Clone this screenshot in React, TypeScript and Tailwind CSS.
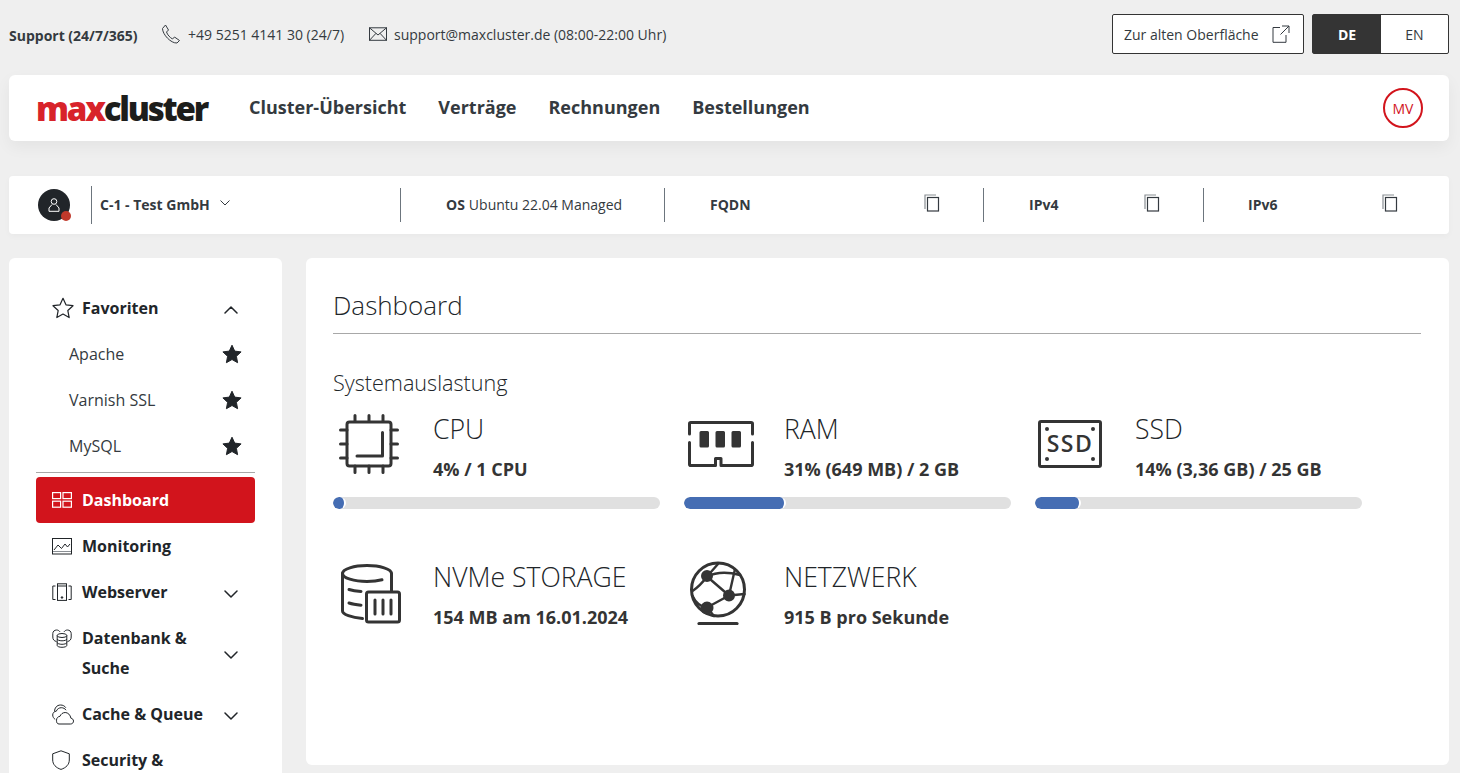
import React from "react";

const dark = "#343434";

function Chevron({ up = false }: { up?: boolean }) {
  return (
    <svg className="mt-[3px] shrink-0" width="14" height="8" viewBox="0 0 14 8" fill="none" stroke="#212529" strokeWidth="1.5" strokeLinecap="round" strokeLinejoin="round">
      <path d={up ? "M1 7L7 1L13 7" : "M1 1L7 7L13 1"} />
    </svg>
  );
}

function Star({ filled = false, size = 20 }: { filled?: boolean; size?: number }) {
  return (
    <svg width={size} height={size} viewBox="0 0 20 20" fill={filled ? "#212529" : "none"} stroke="#212529" strokeWidth={filled ? 1 : 1.1} strokeLinejoin="round">
      <path d="M10 1.2l2.7 5.9 6.4.8-4.7 4.4 1.2 6.4L10 15.5l-5.6 3.2 1.2-6.4L.9 7.9l6.4-.8z" />
    </svg>
  );
}

function CopyIcon() {
  return (
    <svg className="mb-[4px]" width="16" height="18" viewBox="0 0 16 18" fill="none" strokeWidth="1.2">
      <path d="M1 15V1h11" stroke="#8a8f94" />
      <rect x="3.5" y="3.5" width="11" height="13.5" stroke="#343a40" />
    </svg>
  );
}

function DashIcon() {
  return (
    <svg width="20" height="16" viewBox="0 0 20 16" fill="none" stroke="#fff" strokeWidth="1.2">
      <rect x=".6" y=".6" width="8" height="6" />
      <rect x="11" y=".6" width="8.4" height="6" />
      <rect x=".6" y="9.2" width="8" height="6" />
      <rect x="11" y="9.2" width="8.4" height="6" />
    </svg>
  );
}
function MonIcon() {
  return (
    <svg width="20" height="17" viewBox="0 0 20 17" fill="none" stroke="#212529" strokeWidth="1">
      <rect x=".5" y=".5" width="19" height="15.5" />
      <path d="M2 12l4-5 3.5 3.5L13 6l2.5 3L18 6" />
      <path d="M1 13.5h18" stroke="#8a8f94" />
    </svg>
  );
}
function WebIcon() {
  return (
    <svg width="20" height="18" viewBox="0 0 20 18" fill="none" stroke="#212529" strokeWidth="1">
      <path d="M3.5 3H.8v13.5h2.7M16.5 3h2.7v13.5h-2.7" />
      <rect x="5.5" y=".8" width="9" height="16.6" />
      <path d="M5.5 3h9" />
      <circle cx="10" cy="14.5" r=".8" fill="#212529" />
    </svg>
  );
}
function DbIcon() {
  return (
    <svg width="20" height="19" viewBox="0 0 20 19" fill="none" stroke="#212529" strokeWidth="1">
      <path d="M4.5 12.5C2 12 .8 10.5.8 8V4.5C.8 2.5 2.5 1 4.5 1c1.500 0 2.500.6 3.500 1.800" />
      <path d="M15.5 12.5c2.500-.5 3.700-2 3.700-4.500V4.500C19.200 2.500 17.500 1 15.500 1c-1.500 0-2.500.6-3.500 1.800" />
      <ellipse cx="10" cy="6.5" rx="4.8" ry="2" />
      <path d="M5.2 6.5v10c0 1 2.200 1.800 4.800 1.800s4.800-.8 4.800-1.800v-10M5.2 10c0 1 2.200 1.800 4.800 1.800s4.800-.8 4.800-1.800M5.200 13.500c0 1 2.200 1.800 4.800 1.800s4.800-.8 4.800-1.800" />
    </svg>
  );
}
function CacheIcon() {
  return (
    <svg width="22" height="21" viewBox="0 0 22 21" fill="none" stroke="#212529" strokeWidth="1">
      <path d="M7 20h11.500c1.800 0 3-1.300 3-2.900 0-1.500-1.100-2.700-2.600-2.900C18.400 11 16 8.500 13.200 8.500c-2.400 0-4.400 1.600-5.200 3.800C6.200 12.400 4.500 14 4.500 16.200S5 20 7 20z" />
      <path d="M3.200 15.500C1.700 14.300.7 12.800.7 11c0-2.200 1.700-3.800 3.600-3.800C5 5 7.200 3.700 9.300 3.700c2 0 3.700.9 4.800 2.500" />
      <path d="M2.600 7.200C2.500 4.200 4.800 1 8.500 1c2.300 0 4.300 1 5.300 2.700" />
    </svg>
  );
}
function ShieldIcon() {
  return (
    <svg width="18" height="20" viewBox="0 0 18 20" fill="none" stroke="#212529" strokeWidth="1">
      <path d="M9 .8L17.300 3.800V10c0 4.400-3.200 7.800-8.300 9.400C3.900 17.800.7 14.400.7 10V3.800z" />
    </svg>
  );
}

function CpuIcon() {
  return (
    <svg width="60" height="60" viewBox="0 0 60 60" fill="none" stroke={dark} strokeWidth="3" strokeLinecap="round" strokeLinejoin="round">
      <rect x="8" y="8" width="44" height="44" rx="2.5" />
      <path d="M16 1.500v6M30 1.500v6M44 1.500v6M16 52v6.500M30 52v6.500M44 52v6.500M1.500 16h6.500M1.500 30h6.500M1.500 44h6.500M52 16h6.500M52 30h6.500M52 44h6.500" />
      <path d="M43.500 18.500V42H18" />
    </svg>
  );
}
function RamIcon() {
  return (
    <svg width="66" height="46" viewBox="0 0 66 46" fill="none" stroke={dark} strokeWidth="3" strokeLinecap="round" strokeLinejoin="round">
      <path d="M1.500 13V2.800Q1.500 1.500 2.800 1.500H63Q64.500 1.500 64.500 2.800V13" />
      <path d="M1.500 21.500V43.200Q1.500 44.500 2.800 44.500H27.500V37.500H33V44.500H63Q64.500 44.500 64.500 43.200V21.500" />
      <path d="M13 11.500h6.500v13.500H13zM29 11.500h6.500v13.500H29zM45 11.500h6.500v13.500H45z" fill={dark} />
    </svg>
  );
}
function SsdIcon() {
  return (
    <svg width="64" height="48" viewBox="0 0 64 48" fill="none" stroke={dark} strokeWidth="3" strokeLinejoin="round">
      <rect x="1.5" y="1.5" width="61" height="45" rx="1.5" />
      <circle cx="9" cy="9" r="2" fill={dark} stroke="none" />
      <circle cx="55" cy="9" r="2" fill={dark} stroke="none" />
      <circle cx="9" cy="39" r="2" fill={dark} stroke="none" />
      <circle cx="55" cy="39" r="2" fill={dark} stroke="none" />
      <text x="32" y="32" textAnchor="middle" letterSpacing="1.5" fill={dark} stroke="none" fontSize="23" fontWeight="600" style={{ fontFamily: "'Open Sans', sans-serif" }}>SSD</text>
    </svg>
  );
}
function StorageIcon() {
  return (
    <svg width="60" height="60" viewBox="0 0 60 60" fill="none" stroke={dark} strokeWidth="3" strokeLinecap="round" strokeLinejoin="round">
      <path d="M1.500 9.500C1.500 5 13 1.500 26 1.500s24.500 3.500 24.500 8" />
      <path d="M1.500 9.500c0 4.500 11.500 8 24.500 8 5.500 0 11-.6 15-1.700" />
      <path d="M50.500 9.500V27M1.500 9.500V47c0 3.500 9 6.500 20 7.500" />
      <path d="M8 25.500c3 1 7 1.700 12 2M8 39c3 1 7 1.700 12 2.200" />
      <rect x="25.500" y="28" width="33" height="30" rx="2" />
      <path d="M34 36v14M42 36v14M50 36v14" />
    </svg>
  );
}
function NetIcon() {
  return (
    <svg width="60" height="64" viewBox="0 0 60 64" fill="none" stroke={dark} strokeWidth="3" strokeLinecap="round" strokeLinejoin="round">
      <circle cx="30" cy="28.5" r="26.5" />
      <path d="M19 15.500L30 3M19 15.500C15 21 9 27 4.500 30M19 15.500C28 11 41 11 52 14M19 15.500L41 34.500M41 34.500L47 8M41 34.500L56.500 33M41 34.500L19 46.500M19 46.500C13 46 8 42 4.500 35M19 46.500L26 55" strokeWidth="2.4" />
      <circle cx="19" cy="15" r="4.5" fill={dark} />
      <circle cx="41" cy="34.5" r="4.5" fill={dark} />
      <circle cx="19" cy="47" r="5" fill={dark} />
      <path d="M11 62.500h38" strokeWidth="3.2" />
    </svg>
  );
}

function Stat({ icon, title, sub, bar }: { icon: React.ReactNode; title: string; sub: string; bar?: number }) {
  return (
    <div className="w-[327px] h-[138px]">
      <div className="flex">
        <div className="w-[100px] h-[64px] flex items-center shrink-0">{icon}</div>
        <div>
          <div className="text-[26.6px] leading-[34px] font-light text-[#212529]">{title}</div>
          <div className="text-[18px] leading-[24px] font-bold text-[#343434] mt-[11px]">{sub}</div>
        </div>
      </div>
      {bar !== undefined && (
        <div className="h-[12px] rounded-full bg-[#e0e0e0] mt-[16px] overflow-hidden">
          <div className="h-full rounded-full bg-[#456db3] border-r-2 border-white box-content" style={{ width: bar }} />
        </div>
      )}
    </div>
  );
}

function NavItem({ icon, children, chevron = false, active = false }: { icon: React.ReactNode; children: React.ReactNode; chevron?: boolean; active?: boolean }) {
  return (
    <div className={`flex items-center pl-[16px] pr-[17px] py-[8px] rounded-[4px] ${active ? "bg-[#d2141c] text-white" : "text-[#212529]"}`}>
      <div className="w-[30px] shrink-0 self-start h-[30px] flex items-center">{icon}</div>
      <div className="flex-1 text-[16px] leading-[30px] font-bold">{children}</div>
      {chevron && <Chevron />}
    </div>
  );
}

function FavItem({ label }: { label: string }) {
  return (
    <div className="flex items-center justify-between pl-[33px] pr-[13px] h-[46px]">
      <span className="text-[16px] text-[#343a40]">{label}</span>
      <Star filled />
    </div>
  );
}

export default function App() {
  return (
    <div className="h-[773px] overflow-hidden bg-[#efefef] pl-[9px] pr-[11px]" style={{ fontFamily: "'Open Sans', sans-serif" }}>
      <div className="h-[75px] flex items-start">
        <div className="flex items-center h-[68px] text-[#343a40]">
          <span className="text-[14px] font-bold w-[152px] mt-[3px]">Support (24/7/365)</span>
          <svg width="20" height="20" viewBox="0 0 20 20" fill="none" stroke="#343a40" strokeWidth="1" strokeLinejoin="round">
            <path d="M1.5 4.500L4.500 1l3 5-2 2c1 3 3.500 5.500 6 7l2-2 5 3.500-2.500 2.500C10 19.500 1.500 10.500 1.500 4.500z" />
          </svg>
          <span className="text-[14px] ml-[7px] w-[181px]">+49 5251 4141 30 (24/7)</span>
          <svg width="18" height="14" viewBox="0 0 18 14" fill="none" stroke="#343a40" strokeWidth="1">
            <rect x=".5" y=".8" width="17" height="12.5" />
            <path d="M.5.800L9 8l8.500-7.200M.5 13.300l6.500-7M17.500 13.300l-6.500-7" />
          </svg>
          <span className="text-[14px] ml-[7px]">support@maxcluster.de (08:00-22:00 Uhr)</span>
        </div>
        <div className="ml-auto flex gap-[8px] mt-[14px]">
          <div className="w-[192px] h-[40px] border border-[#343434] rounded-[2px] bg-white flex items-center pl-[11px] text-[14px] text-[#343a40]">
            <span className="w-[136px] whitespace-nowrap">Zur alten Oberfläche</span>
            <svg className="ml-[12px]" width="18" height="18" viewBox="0 0 18 18" fill="none" stroke="#343a40" strokeWidth="1">
              <path d="M8 2.500H1v14.800h13V10M10 1h7v7M17 1L8.500 9.500" />
            </svg>
          </div>
          <div className="w-[137px] h-[40px] border border-[#343434] rounded-[2px] bg-white flex text-[14px]">
            <div className="w-[68px] bg-[#343434] text-white font-bold flex items-center justify-center">DE</div>
            <div className="flex-1 flex items-center justify-center text-[#343a40]">EN</div>
          </div>
        </div>
      </div>

      <div className="h-[66px] bg-white rounded-[6px] shadow-[0_6px_16px_rgba(0,0,0,0.05)] flex items-center pl-[27px] pr-[26px]">
        <div className="w-[174px] shrink-0 whitespace-nowrap text-[33px] leading-none font-extrabold tracking-[-2.2px]">
          <span className="text-[#d8232a]">max</span>
          <span className="text-[#1d1d1b]">cluster</span>
        </div>
        <nav className="flex gap-[32px] ml-[39px] mb-[2px] text-[18px] font-bold text-[#343a40]">
          <span>Cluster-Übersicht</span>
          <span>Verträge</span>
          <span>Rechnungen</span>
          <span>Bestellungen</span>
        </nav>
        <div className="ml-auto w-[40px] h-[40px] rounded-full border-2 border-[#d2141c] flex items-center justify-center text-[14px] text-[#d2141c]">MV</div>
      </div>

      <div className="mt-[35px] h-[58px] bg-white rounded-[4px] shadow-[0_2px_6px_rgba(0,0,0,0.03)] flex items-center pl-[29px]">
        <div className="relative w-[32px] h-[32px] rounded-full bg-[#212529] flex items-center justify-center shrink-0">
          <svg width="12" height="14" viewBox="0 0 12 14" fill="none" stroke="#fff" strokeWidth="1">
            <circle cx="6" cy="3.5" r="2.8" />
            <path d="M4 6.500L1 10v3.300h10V10L8 6.500" />
          </svg>
          <span className="absolute right-[-1px] bottom-[0px] w-[10px] h-[10px] rounded-full bg-[#c0392b]" />
        </div>
        <div className="ml-[21px] w-[309px] h-[38px] border-l border-[#6c757d] pl-[8px] flex items-center shrink-0">
          <span className="text-[14px] font-bold text-[#343a40] mb-[2px]">C-1 - Test GmbH</span>
          <svg className="ml-[10px] mb-[4px]" width="10" height="6" viewBox="0 0 10 6" fill="none" stroke="#343a40" strokeWidth="1">
            <path d="M.5.500L5 5l4.500-4.500" />
          </svg>
        </div>
        <div className="w-[264px] h-[34px] border-l border-[#6c757d] pl-[45px] pb-[1px] flex items-center shrink-0 text-[14px] text-[#343a40]">
          <span className="font-bold">OS</span>
          <span className="ml-[4px]">Ubuntu 22.04 Managed</span>
        </div>
        <div className="w-[319px] h-[34px] border-l border-[#6c757d] pl-[45px] pr-[43px] flex items-center justify-between shrink-0">
          <span className="text-[14px] font-bold text-[#343a40] mb-[1px]">FQDN</span>
          <CopyIcon />
        </div>
        <div className="w-[220px] h-[34px] border-l border-[#6c757d] pl-[45px] pr-[43px] flex items-center justify-between shrink-0">
          <span className="text-[14px] font-bold text-[#343a40] mb-[1px]">IPv4</span>
          <CopyIcon />
        </div>
        <div className="w-[218px] h-[34px] border-l border-[#6c757d] pl-[44px] pr-[23px] flex items-center justify-between shrink-0">
          <span className="text-[14px] font-bold text-[#343a40] mb-[1px]">IPv6</span>
          <CopyIcon />
        </div>
      </div>

      <div className="mt-[24px] flex gap-[24px] items-start">
        <aside className="w-[273px] h-[560px] shrink-0 bg-white rounded-[6px] px-[27px] pt-[27px]">
          <div className="flex items-center pl-[16px] pr-[17px] h-[46px] text-[#212529]">
            <div className="w-[30px] shrink-0"><Star size={22} /></div>
            <div className="flex-1 text-[16px] font-bold">Favoriten</div>
            <Chevron up />
          </div>
          <FavItem label="Apache" />
          <FavItem label="Varnish SSL" />
          <FavItem label="MySQL" />
          <div className="border-t border-[#a8a8a8] mt-[3px] mb-[4px]" />
          <NavItem active icon={<DashIcon />}>Dashboard</NavItem>
          <NavItem icon={<MonIcon />}>Monitoring</NavItem>
          <NavItem chevron icon={<WebIcon />}>Webserver</NavItem>
          <NavItem chevron icon={<DbIcon />}>Datenbank &amp; Suche</NavItem>
          <NavItem chevron icon={<CacheIcon />}>Cache &amp; Queue</NavItem>
          <NavItem icon={<ShieldIcon />}>Security &amp;</NavItem>
        </aside>

        <main className="flex-1 h-[507px] bg-white rounded-[6px] pl-[27px] pr-[28px] pt-[27px]">
          <h1 className="text-[26px] leading-[40px] font-light text-[#212529] border-b border-[#a8a8a8] h-[49px]">Dashboard</h1>
          <h2 className="mt-[34px] text-[21.6px] leading-[30px] font-light text-[#212529]">Systemauslastung</h2>
          <div className="mt-[14px] grid grid-cols-[327px_327px_327px] gap-x-[24px] gap-y-[10px]">
            <Stat icon={<span className="ml-[6px]"><CpuIcon /></span>} title="CPU" sub="4% / 1 CPU" bar={11} />
            <Stat icon={<span className="ml-[4px]"><RamIcon /></span>} title="RAM" sub="31% (649 MB) / 2 GB" bar={100} />
            <Stat icon={<span className="ml-[3px]"><SsdIcon /></span>} title="SSD" sub="14% (3,36 GB) / 25 GB" bar={44} />
            <Stat icon={<span className="ml-[8px] mt-[4px]"><StorageIcon /></span>} title="NVMe STORAGE" sub="154 MB am 16.01.2024" />
            <Stat icon={<span className="ml-[4px] mt-[2px]"><NetIcon /></span>} title="NETZWERK" sub="915 B pro Sekunde" />
          </div>
        </main>
      </div>
    </div>
  );
}
